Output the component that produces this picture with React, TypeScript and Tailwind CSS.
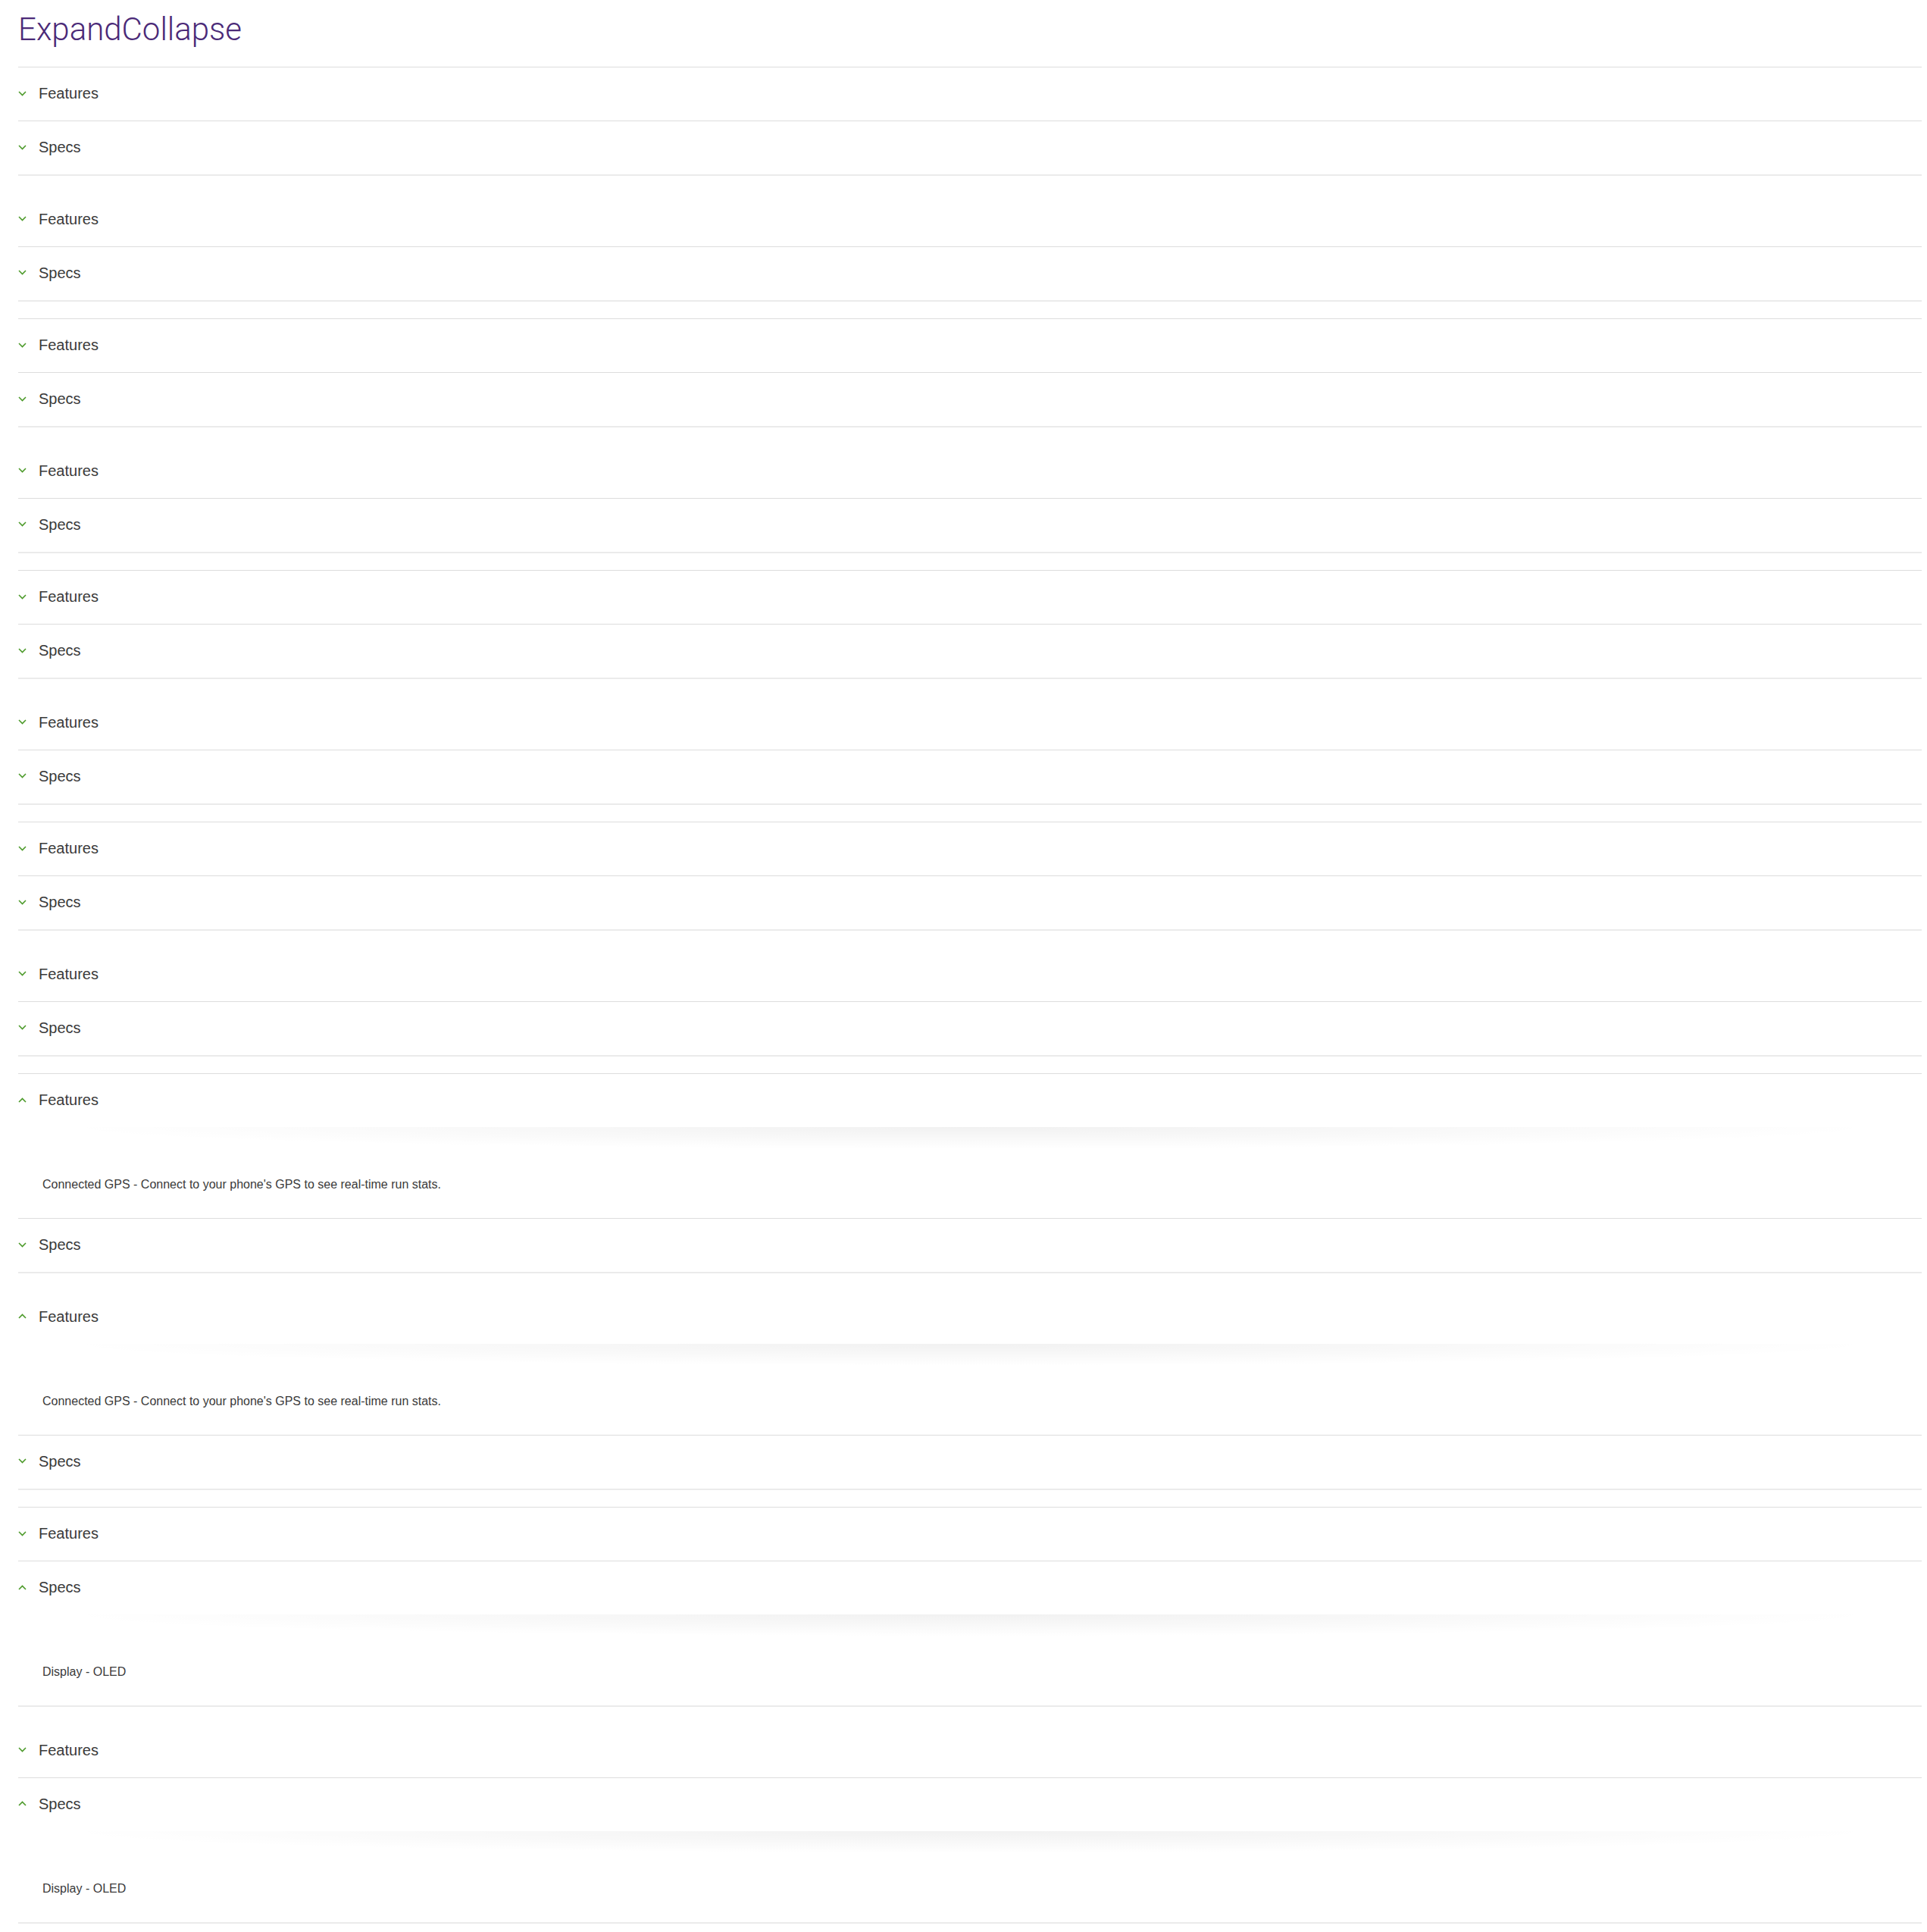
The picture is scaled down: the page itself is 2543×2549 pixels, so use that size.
import { useState } from "react";

type Panel = { label: string; body: string };

const PANELS: Panel[] = [
  { label: "Features", body: "Connected GPS - Connect to your phone's GPS to see real-time run stats." },
  { label: "Specs", body: "Display - OLED" },
];

// which panel is open in each of the 12 demo groups (-1 = none)
const OPEN: number[] = [-1, -1, -1, -1, -1, -1, -1, -1, 0, 0, 1, 1];

function Chevron({ up }: { up: boolean }) {
  return (
    <svg width="11" height="7" viewBox="0 0 11 7" className="shrink-0" aria-hidden>
      <path
        d={up ? "M1 6 L5.5 1.5 L10 6" : "M1 1 L5.5 5.5 L10 1"}
        fill="none"
        stroke="#4c9a2a"
        strokeWidth="1.6"
      />
    </svg>
  );
}

function Group({ bordered, initial }: { bordered: boolean; initial: number }) {
  const [open, setOpen] = useState(initial);
  return (
    <div
      className={
        "mt-[22.5px] first:mt-0 border-b-2 border-[#ebebeb] " +
        (bordered ? "border-t border-t-[#dddddd]" : "")
      }
    >
      {PANELS.map((p, i) => {
        const isOpen = open === i;
        const last = i === PANELS.length - 1;
        return (
          <div key={p.label} className={last ? "" : "border-b border-[#dddddd]"}>
            <button
              type="button"
              onClick={() => setOpen(isOpen ? -1 : i)}
              className="flex h-[70px] w-full items-center gap-[16px] pb-[2px] text-left"
            >
              <Chevron up={isOpen} />
              <span className="text-[20px] leading-[24px] text-[#3a3a3a]">{p.label}</span>
            </button>
            {isOpen && (
              <div>
                <div className="h-[30px] bg-[radial-gradient(ellipse_at_top,rgba(0,0,0,0.055),rgba(0,0,0,0)_68%)]" />
                <p className="pl-[32px] pt-[36px] pb-[34px] text-[16px] leading-[20px] text-[#3a3a3a]">
                  {p.body}
                </p>
              </div>
            )}
          </div>
        );
      })}
    </div>
  );
}

export default function App() {
  return (
    <div className="min-h-screen bg-white pl-[24px] pr-[7px] font-['Liberation_Sans',Arial,sans-serif]">
      <h1 className="pt-[15px] pb-[25px] font-['Roboto','Liberation_Sans',sans-serif] text-[42px] font-light leading-[48px] text-[#4b2a78]">
        ExpandCollapse
      </h1>
      <div>
        {OPEN.map((o, g) => (
          <Group key={g} bordered={g % 2 === 0} initial={o} />
        ))}
      </div>
    </div>
  );
}
